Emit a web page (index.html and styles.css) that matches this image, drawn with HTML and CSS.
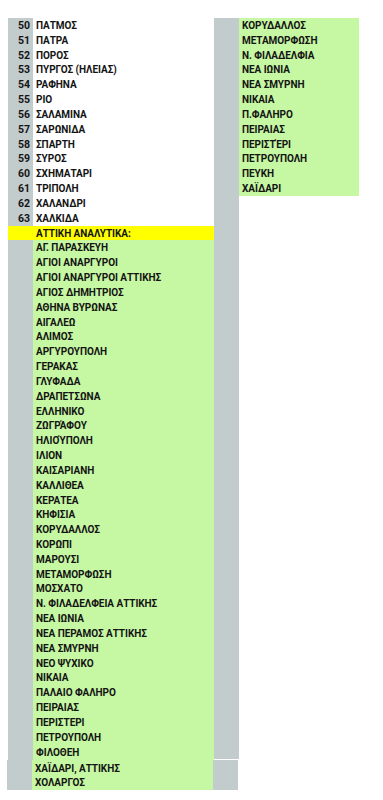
FILE: index.html
```html
<!DOCTYPE html>
<html lang="el">
<head>
<meta charset="utf-8">
<title>Λίστα περιοχών</title>
<link rel="stylesheet" href="styles.css">
</head>
<body>
<div class="sheet">
  <div class="left">
    <div class="row"><span class="num">50</span><span class="name">ΠΑΤΜΟΣ</span></div>
    <div class="row"><span class="num">51</span><span class="name">ΠΑΤΡΑ</span></div>
    <div class="row"><span class="num">52</span><span class="name">ΠΟΡΟΣ</span></div>
    <div class="row"><span class="num">53</span><span class="name">ΠΥΡΓΟΣ (ΗΛΕΙΑΣ)</span></div>
    <div class="row"><span class="num">54</span><span class="name">ΡΑΦΗΝΑ</span></div>
    <div class="row"><span class="num">55</span><span class="name">ΡΙΟ</span></div>
    <div class="row"><span class="num">56</span><span class="name">ΣΑΛΑΜΙΝΑ</span></div>
    <div class="row"><span class="num">57</span><span class="name">ΣΑΡΩΝΙΔΑ</span></div>
    <div class="row"><span class="num">58</span><span class="name">ΣΠΑΡΤΗ</span></div>
    <div class="row"><span class="num">59</span><span class="name">ΣΥΡΟΣ</span></div>
    <div class="row"><span class="num">60</span><span class="name">ΣΧΗΜΑΤΑΡΙ</span></div>
    <div class="row"><span class="num">61</span><span class="name">ΤΡΙΠΟΛΗ</span></div>
    <div class="row"><span class="num">62</span><span class="name">ΧΑΛΑΝΔΡΙ</span></div>
    <div class="row"><span class="num">63</span><span class="name">ΧΑΛΚΙΔΑ</span></div>
    <div class="row head"><span class="num"></span><span class="name">ΑΤΤΙΚΗ ΑΝΑΛΥΤΙΚΑ:</span></div>
    <div class="row area"><span class="num"></span><span class="name">ΑΓ. ΠΑΡΑΣΚΕΥΗ</span></div>
    <div class="row area"><span class="num"></span><span class="name">ΑΓΙΟΙ ΑΝΑΡΓΥΡΟΙ</span></div>
    <div class="row area"><span class="num"></span><span class="name">ΑΓΙΟΙ ΑΝΑΡΓΥΡΟΙ ΑΤΤΙΚΗΣ</span></div>
    <div class="row area"><span class="num"></span><span class="name">ΑΓΙΟΣ ΔΗΜΗΤΡΙΟΣ</span></div>
    <div class="row area"><span class="num"></span><span class="name">ΑΘΗΝΑ ΒΥΡΩΝΑΣ</span></div>
    <div class="row area"><span class="num"></span><span class="name">ΑΙΓΑΛΕΩ</span></div>
    <div class="row area"><span class="num"></span><span class="name">ΑΛΙΜΟΣ</span></div>
    <div class="row area"><span class="num"></span><span class="name">ΑΡΓΥΡΟΥΠΟΛΗ</span></div>
    <div class="row area"><span class="num"></span><span class="name">ΓΕΡΑΚΑΣ</span></div>
    <div class="row area"><span class="num"></span><span class="name">ΓΛΥΦΑΔΑ</span></div>
    <div class="row area"><span class="num"></span><span class="name">ΔΡΑΠΕΤΣΩΝΑ</span></div>
    <div class="row area"><span class="num"></span><span class="name">ΕΛΛΗΝΙΚΟ</span></div>
    <div class="row area"><span class="num"></span><span class="name">ΖΩΓΡΆΦΟΥ</span></div>
    <div class="row area"><span class="num"></span><span class="name">ΗΛΙΟΎΠΟΛΗ</span></div>
    <div class="row area"><span class="num"></span><span class="name">ΙΛΙΟΝ</span></div>
    <div class="row area"><span class="num"></span><span class="name">ΚΑΙΣΑΡΙΑΝΗ</span></div>
    <div class="row area"><span class="num"></span><span class="name">ΚΑΛΛΙΘΕΑ</span></div>
    <div class="row area"><span class="num"></span><span class="name">ΚΕΡΑΤΕΑ</span></div>
    <div class="row area"><span class="num"></span><span class="name">ΚΗΦΙΣΙΑ</span></div>
    <div class="row area"><span class="num"></span><span class="name">ΚΟΡΥΔΑΛΛΟΣ</span></div>
    <div class="row area"><span class="num"></span><span class="name">ΚΟΡΩΠΙ</span></div>
    <div class="row area"><span class="num"></span><span class="name">ΜΑΡΟΥΣΙ</span></div>
    <div class="row area"><span class="num"></span><span class="name">ΜΕΤΑΜΟΡΦΩΣΗ</span></div>
    <div class="row area"><span class="num"></span><span class="name">ΜΟΣΧΑΤΟ</span></div>
    <div class="row area"><span class="num"></span><span class="name">Ν. ΦΙΛΑΔΕΛΦΕΙΑ ΑΤΤΙΚΗΣ</span></div>
    <div class="row area"><span class="num"></span><span class="name">ΝΕΑ ΙΩΝΙΑ</span></div>
    <div class="row area"><span class="num"></span><span class="name">ΝΕΑ ΠΕΡΑΜΟΣ ΑΤΤΙΚΗΣ</span></div>
    <div class="row area"><span class="num"></span><span class="name">ΝΕΑ ΣΜΥΡΝΗ</span></div>
    <div class="row area"><span class="num"></span><span class="name">ΝΕΟ ΨΥΧΙΚΟ</span></div>
    <div class="row area"><span class="num"></span><span class="name">ΝΙΚΑΙΑ</span></div>
    <div class="row area"><span class="num"></span><span class="name">ΠΑΛΑΙΟ ΦΑΛΗΡΟ</span></div>
    <div class="row area"><span class="num"></span><span class="name">ΠΕΙΡΑΙΑΣ</span></div>
    <div class="row area"><span class="num"></span><span class="name">ΠΕΡΙΣΤΕΡΙ</span></div>
    <div class="row area"><span class="num"></span><span class="name">ΠΕΤΡΟΥΠΟΛΗ</span></div>
    <div class="row area"><span class="num"></span><span class="name">ΦΙΛΟΘΕΗ</span></div>
  </div>
  <div class="sep"></div>
  <div class="right">
    <div class="rrow">ΚΟΡΥΔΑΛΛΟΣ</div>
    <div class="rrow">ΜΕΤΑΜΟΡΦΩΣΗ</div>
    <div class="rrow">Ν. ΦΙΛΑΔΕΛΦΙΑ</div>
    <div class="rrow">ΝΕΑ ΙΩΝΙΑ</div>
    <div class="rrow">ΝΕΑ ΣΜΥΡΝΗ</div>
    <div class="rrow">ΝΙΚΑΙΑ</div>
    <div class="rrow">Π.ΦΑΛΗΡΟ</div>
    <div class="rrow">ΠΕΙΡΑΙΑΣ</div>
    <div class="rrow">ΠΕΡΙΣΤΈΡΙ</div>
    <div class="rrow">ΠΕΤΡΟΥΠΟΛΗ</div>
    <div class="rrow">ΠΕΥΚΗ</div>
    <div class="rrow">ΧΑΪΔΑΡΙ</div>
  </div>
</div>
<div class="paste">
  <div class="left">
    <div class="row area tall"><span class="num"></span><span class="name">ΧΑΪΔΑΡΙ, ΑΤΤΙΚΗΣ</span></div>
    <div class="row area"><span class="num"></span><span class="name">ΧΟΛΑΡΓΟΣ</span></div>
  </div>
  <div class="sep"></div>
</div>
</body>
</html>
```

FILE: styles.css
```css
html, body {
  margin: 0;
  padding: 0;
  background: #ffffff;
}

body {
  font-family: Roboto, "Liberation Sans", Arial, sans-serif;
  font-weight: bold;
  font-size: 10px;
  letter-spacing: -0.05px;
  color: #141414;
}

.sheet {
  display: flex;
  align-items: stretch;
  margin: 18px 0 0 8px;
}

.left {
  width: 206px;
  display: flex;
  flex-direction: column;
}

.row {
  display: grid;
  grid-template-columns: 25px 1fr;
  height: 14.83px;
  line-height: 15.5px;
}

.num {
  background: #c3cccc;
  text-align: right;
  padding-right: 3px;
  font-size: 10.5px;
}

.name {
  padding-left: 3px;
  white-space: nowrap;
}

.head {
  background: #ffff00;
}

.head .num {
  background: #ffff00;
}

.area .name {
  background: #c6f7a2;
}

.sep {
  width: 25px;
  background: #c3cccc;
}

.right {
  width: 120px;
  display: flex;
  flex-direction: column;
  align-self: flex-start;
  background: #c6f7a2;
}

.rrow {
  height: 14.83px;
  line-height: 15.5px;
  padding-left: 3px;
  white-space: nowrap;
}

.paste {
  display: flex;
  margin: 1px 0 0 7px;
}

.paste .row {
  height: 15px;
  line-height: 15px;
}

.paste .row.tall {
  height: 15px;
  line-height: 17px;
}
```
